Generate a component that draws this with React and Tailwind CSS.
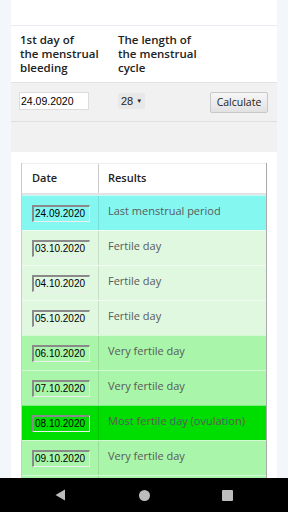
const ROWS = [
  { date: '24.09.2020', text: 'Last menstrual period', bg: 'bg-[#84f7f1]' },
  { date: '03.10.2020', text: 'Fertile day', bg: 'bg-[#e0f8e0]' },
  { date: '04.10.2020', text: 'Fertile day', bg: 'bg-[#e0f8e0]' },
  { date: '05.10.2020', text: 'Fertile day', bg: 'bg-[#e0f8e0]' },
  { date: '06.10.2020', text: 'Very fertile day', bg: 'bg-[#a9f5a9]' },
  { date: '07.10.2020', text: 'Very fertile day', bg: 'bg-[#a9f5a9]' },
  { date: '08.10.2020', text: 'Most fertile day (ovulation)', bg: 'bg-[#00dd00]' },
  { date: '09.10.2020', text: 'Very fertile day', bg: 'bg-[#a9f5a9]' },
  { date: '10.10.2020', text: 'Very fertile day', bg: 'bg-[#a9f5a9]' },
]

function Row({ row }) {
  return (
    <div className={`flex h-[35px] border-t border-white/50 ${row.bg}`}>
      <div className="w-[77px] shrink-0 pl-[10px] pt-[9px] border-r border-black/10">
        <div className="w-[58px] h-[17px] border-t-2 border-l-2 border-b border-r border-t-[#8a8a8a] border-l-[#8a8a8a] border-b-[#eee] border-r-[#eee] text-[10px] leading-[14px] text-black font-['Liberation_Sans',sans-serif] pl-[1px] overflow-hidden whitespace-nowrap">
          {row.date}
        </div>
      </div>
      <div className="flex-1 pl-[9px] pt-[7px] text-[11px] leading-[16px] text-[#5a5a5a]">
        {row.text}
      </div>
    </div>
  )
}

export default function App() {
  return (
    <div className="h-[512px] w-[288px] bg-[#f3f6fa] flex flex-col overflow-hidden font-['Open_Sans',sans-serif]">
      <div className="flex-1 overflow-hidden px-[11px]">
        <div className="bg-white h-full">
          <div className="h-[26px] border-b border-[#e8ebef]"></div>
          <div className="flex pl-[9px] pt-[7px] pb-[7px] text-[11.5px] leading-[14px] font-semibold text-[#222] border-b border-[#e3e3e3]">
            <div className="w-[98px]">1st day of<br />the menstrual<br />bleeding</div>
            <div>The length of<br />the menstrual<br />cycle</div>
          </div>
          <div className="flex items-start h-[39px] bg-[#f1f1f1] pl-[8px] pr-[9px] pt-[9px] border-b border-[#e0e0e0]">
            <div className="w-[70px] h-[18px] bg-white border border-[#ddd] text-[10.5px] leading-[16px] pl-[1px] text-black font-['Liberation_Sans',sans-serif]">
              24.09.2020
            </div>
            <div className="ml-[29px] mt-[1px] w-[27px] h-[16px] bg-[#e8e8e8] rounded-[2px] flex items-center pl-[3px] text-[11px] text-[#222] font-['Liberation_Sans',sans-serif]">
              28<span className="ml-[3px] text-[6px]">▼</span>
            </div>
            <div className="ml-auto w-[58px] h-[21px] bg-gradient-to-b from-[#f6f6f6] to-[#e2e2e2] border border-[#c8c8c8] rounded-[2px] flex items-center justify-center text-[10.5px] text-[#222]">
              Calculate
            </div>
          </div>
          <div className="h-[30px] bg-[#f1f1f1]"></div>
          <div className="px-[10px] pt-[11px]">
            <div className="border-l border-[#ccc] border-r border-r-[#aaa]">
              <div className="flex h-[32px] border-t border-[#eee] bg-white text-[11px] font-semibold text-[#222] border-b-2 border-b-[#e2e2e2]">
                <div className="w-[77px] shrink-0 pl-[10px] flex items-center border-r border-[#ccc]">Date</div>
                <div className="pl-[9px] flex items-center">Results</div>
              </div>
              {ROWS.map((r, i) => <Row key={i} row={r} />)}
            </div>
          </div>
        </div>
      </div>
      <div className="h-[34px] bg-black flex items-center shrink-0">
        <div className="w-[120px] flex justify-center">
          <svg width="11" height="12" viewBox="0 0 11 12"><path d="M10 0.5 L0.5 6 L10 11.5 Z" fill="#bdbdbd" /></svg>
        </div>
        <div className="w-[48px] flex justify-center">
          <div className="w-[11px] h-[11px] rounded-full bg-[#bdbdbd]"></div>
        </div>
        <div className="w-[118px] flex justify-center">
          <div className="w-[11px] h-[11px] rounded-[1px] bg-[#bdbdbd]"></div>
        </div>
      </div>
    </div>
  )
}
